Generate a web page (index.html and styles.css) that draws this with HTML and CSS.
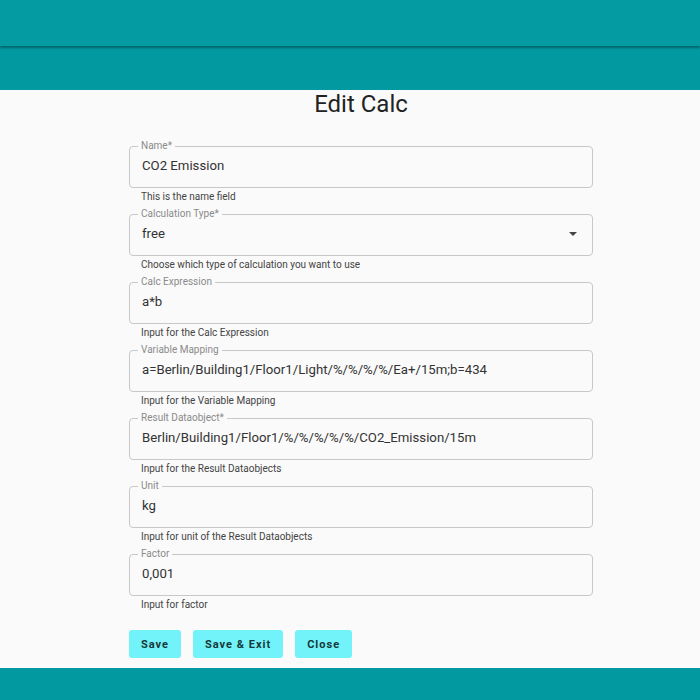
FILE: index.html
```html
<!DOCTYPE html>
<html lang="en">
<head>
    <meta charset="UTF-8">
    <meta name="viewport" content="width=device-width, initial-scale=1.0">
    <title>Edit Calc</title>
    <link rel="stylesheet" href="styles.css">
</head>
<body>
    <header class="app-header">
        <div class="toolbar"></div>
        <div class="subbar"></div>
    </header>

    <main class="content">
        <form class="calc-form">
            <h1>Edit Calc</h1>

            <fieldset class="field">
                <legend>Name*</legend>
                <div class="value">CO2 Emission</div>
            </fieldset>
            <p class="helper">This is the name field</p>

            <fieldset class="field">
                <legend>Calculation Type*</legend>
                <div class="value select">free <span class="caret"></span></div>
            </fieldset>
            <p class="helper">Choose which type of calculation you want to use</p>

            <fieldset class="field">
                <legend>Calc Expression</legend>
                <div class="value">a*b</div>
            </fieldset>
            <p class="helper">Input for the Calc Expression</p>

            <fieldset class="field">
                <legend>Variable Mapping</legend>
                <div class="value">a=Berlin/Building1/Floor1/Light/%/%/%/%/Ea+/15m;b=434</div>
            </fieldset>
            <p class="helper">Input for the Variable Mapping</p>

            <fieldset class="field">
                <legend>Result Dataobject*</legend>
                <div class="value">Berlin/Building1/Floor1/%/%/%/%/%/CO2_Emission/15m</div>
            </fieldset>
            <p class="helper">Input for the Result Dataobjects</p>

            <fieldset class="field">
                <legend>Unit</legend>
                <div class="value">kg</div>
            </fieldset>
            <p class="helper">Input for unit of the Result Dataobjects</p>

            <fieldset class="field">
                <legend>Factor</legend>
                <div class="value">0,001</div>
            </fieldset>
            <p class="helper">Input for factor</p>

            <div class="actions">
                <button type="button" class="btn">Save</button>
                <button type="button" class="btn">Save &amp; Exit</button>
                <button type="button" class="btn">Close</button>
            </div>
        </form>
    </main>

    <footer class="app-footer"></footer>
</body>
</html>
```

FILE: styles.css
```css
body {
    font-family: Roboto, 'Noto Sans', sans-serif;
    margin: 0;
    height: 700px;
    display: flex;
    flex-direction: column;
    background-color: #fafafa;
    color: #333;
    overflow: hidden;
}

.app-header {
    height: 90px;
    display: flex;
    flex-direction: column;
    background-color: #0299a1;
}

.toolbar {
    height: 46px;
    background-color: #059ba3;
    box-shadow: 0 2px 2px rgba(0, 40, 45, 0.45);
    position: relative;
}

.subbar {
    flex: 1;
}

.content {
    flex: 1;
}

.calc-form {
    width: 464px;
    margin-left: 129px;
}

h1 {
    margin: 0 0 23px;
    font-size: 24px;
    line-height: 28px;
    font-weight: 400;
    color: #222;
    text-align: center;
}

.field {
    margin: 0;
    padding: 0 12px 6px;
    border: 1px solid #c8c8c8;
    border-radius: 4px;
    min-width: 0;
}

.field legend {
    margin-left: -4px;
    padding: 0 3px;
    font-size: 10px;
    line-height: 10px;
    color: #8a8a8a;
}

.value {
    height: 30px;
    line-height: 30px;
    font-size: 13.2px;
    color: #333;
    white-space: nowrap;
}

.select {
    display: flex;
    justify-content: space-between;
    align-items: center;
}

.caret {
    width: 0;
    height: 0;
    margin-right: 3px;
    border-left: 4px solid transparent;
    border-right: 4px solid transparent;
    border-top: 4px solid #444;
}

.helper {
    margin: 3px 0 6px 12px;
    font-size: 10px;
    line-height: 12px;
    color: #444;
}

.actions {
    display: flex;
    gap: 12px;
    margin-top: 19px;
}

.btn {
    height: 28px;
    padding: 0 12px;
    border: none;
    border-radius: 3px;
    background-color: #72f3fa;
    font-family: Roboto, sans-serif;
    font-size: 11px;
    font-weight: 700;
    letter-spacing: 1px;
    color: #163838;
    cursor: pointer;
}

.app-footer {
    height: 32px;
    background-color: #0299a1;
}
```
